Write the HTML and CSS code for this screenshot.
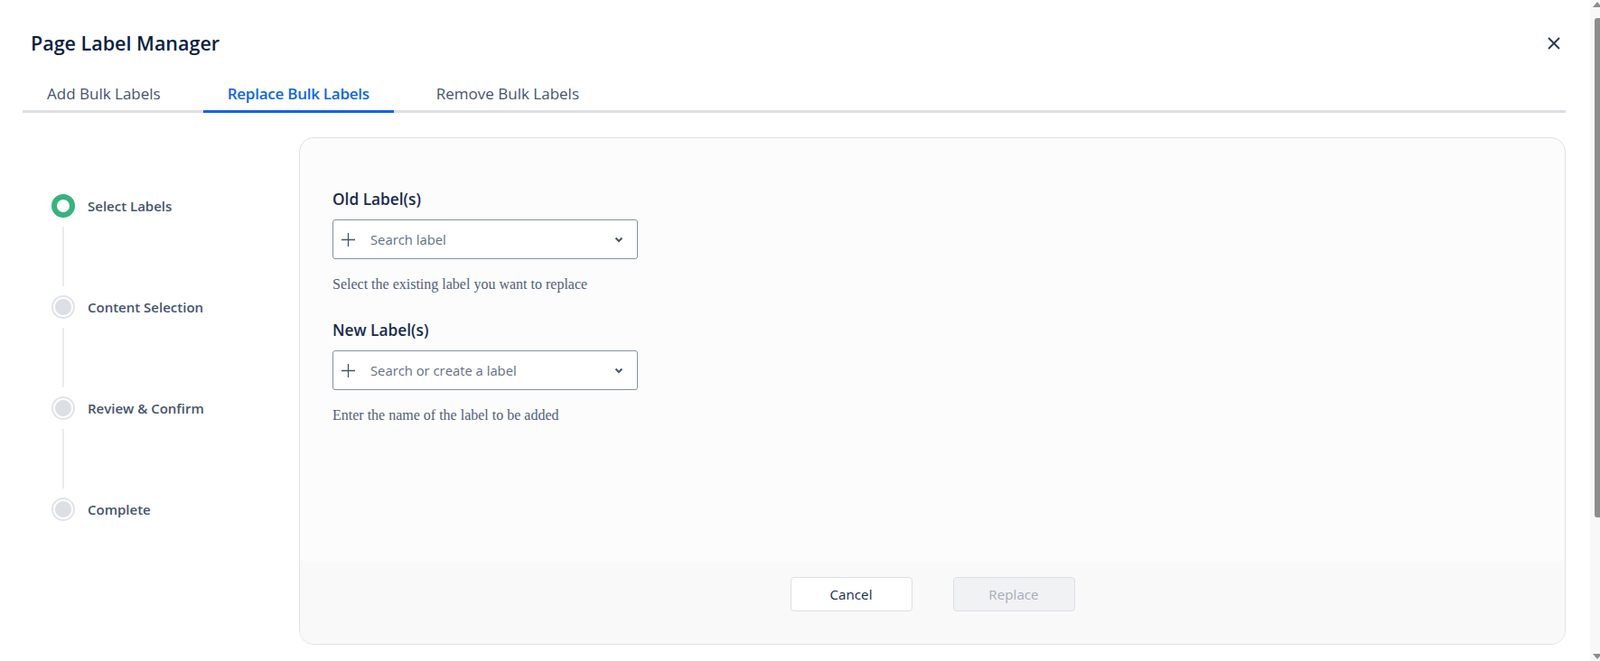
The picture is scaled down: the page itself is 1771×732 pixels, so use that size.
FILE: index.html
```html
<!DOCTYPE html>
<html lang="en">
<head>
    <meta charset="UTF-8">
    <meta name="viewport" content="width=device-width, initial-scale=1.0">
    <title>Page Label Manager</title>
    <link rel="stylesheet" href="styles.css">
</head>
<body>
    <div class="page">
        <div class="modal">
            <header class="modal-header">
                <h1 class="modal-title">Page Label Manager</h1>
                <button class="close-btn" type="button" aria-label="Close">
                    <svg width="14" height="14" viewBox="0 0 14 14"><path d="M1 1L13 13M13 1L1 13" stroke="currentColor" stroke-width="1.8" fill="none"/></svg>
                </button>
            </header>

            <nav class="tabs">
                <a class="tab">Add Bulk Labels</a>
                <a class="tab active">Replace Bulk Labels</a>
                <a class="tab">Remove Bulk Labels</a>
            </nav>

            <div class="modal-body">
                <ol class="steps">
                    <li class="step current"><span class="step-dot"></span><span class="step-name">Select Labels</span></li>
                    <li class="step-line"></li>
                    <li class="step"><span class="step-dot"></span><span class="step-name">Content Selection</span></li>
                    <li class="step-line"></li>
                    <li class="step"><span class="step-dot"></span><span class="step-name">Review &amp; Confirm</span></li>
                    <li class="step-line"></li>
                    <li class="step"><span class="step-dot"></span><span class="step-name">Complete</span></li>
                </ol>

                <section class="card">
                    <div class="card-body">
                        <div class="field">
                            <label class="field-label">Old Label(s)</label>
                            <div class="select">
                                <svg class="plus" width="15" height="15" viewBox="0 0 15 15"><path d="M7.5 0V15M0 7.5H15" stroke="currentColor" stroke-width="1.3" fill="none"/></svg>
                                <span class="placeholder">Search label</span>
                                <svg class="chevron" width="10" height="7" viewBox="0 0 10 7"><path d="M1.5 1.5L5 5L8.5 1.5" stroke="currentColor" stroke-width="2" fill="none"/></svg>
                            </div>
                            <p class="hint">Select the existing label you want to replace</p>
                        </div>
                        <div class="field">
                            <label class="field-label">New Label(s)</label>
                            <div class="select">
                                <svg class="plus" width="15" height="15" viewBox="0 0 15 15"><path d="M7.5 0V15M0 7.5H15" stroke="currentColor" stroke-width="1.3" fill="none"/></svg>
                                <span class="placeholder">Search or create a label</span>
                                <svg class="chevron" width="10" height="7" viewBox="0 0 10 7"><path d="M1.5 1.5L5 5L8.5 1.5" stroke="currentColor" stroke-width="2" fill="none"/></svg>
                            </div>
                            <p class="hint">Enter the name of the label to be added</p>
                        </div>
                    </div>
                    <div class="card-footer">
                        <button class="btn" type="button">Cancel</button>
                        <button class="btn btn-disabled" type="button" disabled>Replace</button>
                    </div>
                </section>
            </div>
        </div>

        <div class="scrollbar">
            <svg class="arrow" width="11" height="9" viewBox="0 0 11 9"><path d="M3 8L8 2L13 8Z" fill="#8c8c8c"/></svg>
            <span class="thumb"></span>
            <svg class="arrow" width="11" height="9" viewBox="0 0 11 9"><path d="M3 1L8 7L13 1Z" fill="#8c8c8c"/></svg>
        </div>
    </div>
</body>
</html>
```

FILE: styles.css
```css
body {
    margin: 0;
    padding: 0;
    font-family: 'Open Sans', 'Noto Sans', sans-serif;
    background: #fff;
    color: #172b4d;
}

.page {
    display: flex;
    height: 732px;
    overflow: hidden;
}

.modal {
    flex: 1;
    padding: 0 27px 0 25px;
}

/* header */
.modal-header {
    display: flex;
    justify-content: space-between;
    align-items: flex-start;
    height: 66px;
    padding-top: 30px;
    box-sizing: border-box;
}

.modal-title {
    margin: 0;
    padding-left: 9px;
    font-size: 21.5px;
    font-weight: 600;
    line-height: 36px;
    color: #091e42;
}

.close-btn {
    width: 26px;
    height: 36px;
    padding: 0;
    border: none;
    background: none;
    color: #253858;
    display: flex;
    align-items: center;
    justify-content: center;
}

/* tabs */
.tabs {
    display: flex;
    gap: 20px;
    border-bottom: 3px solid #dcdfe4;
}

.tab {
    padding: 26px 27px 6px;
    margin-bottom: -3px;
    font-size: 17px;
    line-height: 24px;
    color: #44546f;
    border-bottom: 3px solid transparent;
}

.tab.active {
    color: #0c66e4;
    font-weight: 600;
    letter-spacing: -0.25px;
    border-bottom-color: #0c66e4;
}

/* body */
.modal-body {
    display: flex;
    padding-top: 27px;
}

.steps {
    list-style: none;
    margin: 0;
    padding: 63px 0 0 32px;
    width: 306px;
    box-sizing: border-box;
    flex-shrink: 0;
}

.step {
    display: flex;
    align-items: center;
    gap: 14px;
    height: 26px;
}

.step-dot {
    width: 26px;
    height: 26px;
    box-sizing: border-box;
    border-radius: 50%;
    border: 2px solid #e1e3e8;
    background: radial-gradient(circle, #dcdfe4 0 8.5px, #fff 9.5px);
    flex-shrink: 0;
}

.step.current .step-dot {
    border: 6px solid #36b37e;
    background: #fff;
}

.step-name {
    font-size: 15px;
    font-weight: 600;
    color: #44546f;
}

.step-line {
    width: 2px;
    height: 66px;
    margin: 10px 0 10px 12px;
    background: #ebecf0;
}

.card {
    flex: 1;
    height: 562px;
    box-sizing: border-box;
    display: flex;
    flex-direction: column;
    border: 1px solid #dfe1e6;
    border-radius: 16px;
    background: #fcfcfd;
    overflow: hidden;
}

.card-body {
    flex: 1;
    padding: 56px 36px 0;
}

.field + .field {
    margin-top: 29px;
}

.field-label {
    display: block;
    font-size: 17.3px;
    font-weight: 600;
    line-height: 24px;
    margin-bottom: 10px;
    color: #172b4d;
}

.select {
    display: flex;
    align-items: center;
    width: 338px;
    height: 44px;
    box-sizing: border-box;
    padding: 0 15px 0 9px;
    border: 1px solid #8590a2;
    border-radius: 3px;
    background: #fff;
}

.plus {
    color: #44546f;
    flex-shrink: 0;
}

.placeholder {
    flex: 1;
    margin-left: 17px;
    font-size: 14.8px;
    color: #626f86;
}

.chevron {
    color: #44546f;
}

.hint {
    margin: 18px 0 0;
    font-family: 'Liberation Serif', serif;
    font-size: 16px;
    line-height: 20px;
    color: #505f79;
}

.card-footer {
    height: 92px;
    box-sizing: border-box;
    padding-top: 18px;
    display: flex;
    justify-content: center;
    align-items: flex-start;
    gap: 45px;
    background: #f9f9fa;
}

.btn {
    width: 135px;
    height: 38px;
    border: 1px solid #dcdfe4;
    border-radius: 4px;
    background: #fff;
    font-family: inherit;
    font-size: 15.2px;
    color: #172b4d;
}

.btn-disabled {
    background: #f1f2f4;
    color: #a5adba;
}

/* fake browser scrollbar */
.scrollbar {
    width: 11px;
    display: flex;
    flex-direction: column;
    background: #f8f8f8;
}

.arrow {
    display: block;
    flex-shrink: 0;
}

.thumb {
    display: block;
    height: 553px;
    margin: 11px 0 0 5px;
    border-radius: 3px 0 0 3px;
    background: #8c8c8c;
}

.thumb + .arrow {
    margin-top: auto;
}
```
